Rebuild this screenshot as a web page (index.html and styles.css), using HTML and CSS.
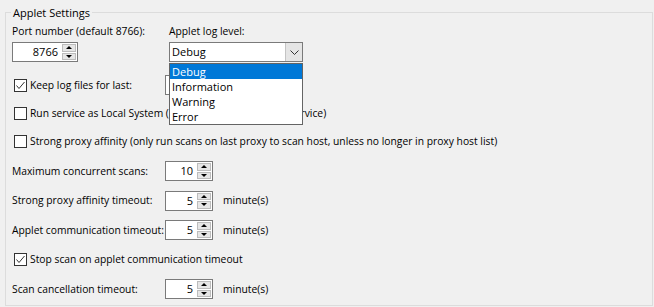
FILE: index.html
```html
<!DOCTYPE html>
<html>

<head>
    <title>Applet Settings</title>
    <link rel="stylesheet" href="styles.css">
</head>

<body>
    <fieldset class="group">
        <legend>Applet Settings</legend>

        <div class="top-row">
            <div class="field port-field">
                <label>Port number (default 8766):</label>
                <div class="spin spin-wide">
                    <span class="value">8766</span>
                    <span class="arrows"><span class="up"></span><span class="down"></span></span>
                </div>
            </div>
            <div class="field level-field">
                <label>Applet log level:</label>
                <div class="combo">
                    <span class="value">Debug</span>
                    <span class="drop-btn">
                        <svg width="9" height="5" viewBox="0 0 9 5"><polyline points="0.5,0.5 4.5,4.5 8.5,0.5" fill="none" stroke="#333" stroke-width="1"/></svg>
                    </span>
                </div>
                <ul class="drop-list">
                    <li class="selected">Debug</li>
                    <li>Information</li>
                    <li>Warning</li>
                    <li>Error</li>
                </ul>
            </div>
        </div>

        <div class="rows">
            <div class="row">
                <label class="check-label keep-label"><span class="check"><svg width="11" height="11" viewBox="0 0 11 11"><polyline points="1.5,5.5 4,8.5 9.5,2" fill="none" stroke="#333" stroke-width="1"/></svg></span>Keep log files for last:</label>
                <div class="spin"><span class="value">7</span><span class="arrows"><span class="up"></span><span class="down"></span></span></div>
            </div>
            <div class="row">
                <label class="check-label"><span class="check"></span>Run service as Local System (it will restart the applet's service)</label>
            </div>
            <div class="row">
                <label class="check-label"><span class="check"></span>Strong proxy affinity (only run scans on last proxy to scan host, unless no longer in proxy host list)</label>
            </div>
        </div>

        <div class="rows spin-rows">
            <div class="row">
                <label class="row-label">Maximum concurrent scans:</label>
                <div class="spin"><span class="value">10</span><span class="arrows"><span class="up"></span><span class="down"></span></span></div>
            </div>
            <div class="row">
                <label class="row-label">Strong proxy affinity timeout:</label>
                <div class="spin"><span class="value">5</span><span class="arrows"><span class="up"></span><span class="down"></span></span></div>
                <span class="unit">minute(s)</span>
            </div>
            <div class="row">
                <label class="row-label">Applet communication timeout:</label>
                <div class="spin"><span class="value">5</span><span class="arrows"><span class="up"></span><span class="down"></span></span></div>
                <span class="unit">minute(s)</span>
            </div>
            <div class="row">
                <label class="check-label"><span class="check"><svg width="11" height="11" viewBox="0 0 11 11"><polyline points="1.5,5.5 4,8.5 9.5,2" fill="none" stroke="#333" stroke-width="1"/></svg></span>Stop scan on applet communication timeout</label>
            </div>
            <div class="row">
                <label class="row-label">Scan cancellation timeout:</label>
                <div class="spin"><span class="value">5</span><span class="arrows"><span class="up"></span><span class="down"></span></span></div>
                <span class="unit">minute(s)</span>
            </div>
        </div>
    </fieldset>
</body>

</html>
```

FILE: styles.css
```css
body {
    font-family: "Open Sans", "Noto Sans", sans-serif;
    font-size: 10.3px;
    line-height: 15px;
    color: #000;
    background-color: #f0f0f0;
    margin: 0;
    padding: 5px 0 0 0;
}

.group {
    box-sizing: border-box;
    height: 301px;
    margin: 0 1px 0 5px;
    padding: 3px 6px 0 6px;
    border: 1px solid #dcdcdc;
}

.group legend {
    padding: 0 2px;
    margin-left: -1px;
    font-size: 11px;
}

.top-row {
    display: flex;
    margin-top: 1px;
}

.field {
    display: flex;
    flex-direction: column;
    gap: 3px;
}

.port-field {
    width: 157px;
}

.level-field {
    position: relative;
}

.spin {
    display: flex;
    flex-shrink: 0;
    width: 48px;
    height: 20px;
    box-sizing: border-box;
    border: 1px solid #7a7a7a;
    background-color: #fff;
}

.spin-wide {
    width: 66px;
}

.spin .value {
    flex: 1;
    text-align: right;
    padding-right: 4px;
    line-height: 18px;
    font-size: 11px;
}

.arrows {
    width: 14px;
    display: flex;
    flex-direction: column;
    gap: 1px;
    padding: 1px 1px 1px 0;
}

.arrows span {
    flex: 1;
    display: flex;
    align-items: center;
    justify-content: center;
    background-color: #e6e6e6;
    border: 1px solid #bcbcbc;
}

.arrows .up::after {
    content: "";
    border-left: 3px solid transparent;
    border-right: 3px solid transparent;
    border-bottom: 3px solid #000;
}

.arrows .down::after {
    content: "";
    border-left: 3px solid transparent;
    border-right: 3px solid transparent;
    border-top: 3px solid #000;
}

.combo {
    display: flex;
    width: 134px;
    height: 20px;
    box-sizing: border-box;
    border: 1px solid #7a7a7a;
    background-color: #fff;
}

.combo .value {
    flex: 1;
    padding-left: 2px;
    line-height: 18px;
    font-size: 11px;
}

.drop-btn {
    width: 16px;
    display: flex;
    align-items: center;
    justify-content: center;
    background-color: #e5e5e5;
    border-left: 1px solid #c4c4c4;
}

.drop-list {
    position: absolute;
    left: 0;
    top: 39px;
    width: 134px;
    box-sizing: border-box;
    margin: 0;
    padding: 0;
    list-style: none;
    background-color: #fff;
    border: 1px solid #646464;
    z-index: 2;
}

.drop-list li {
    height: 15px;
    line-height: 15px;
    padding-left: 2px;
    font-size: 11px;
}

.drop-list li.selected {
    background-color: #0078d7;
    color: #fff;
}

.rows {
    display: flex;
    flex-direction: column;
    gap: 8px;
    margin-top: 13px;
}

.spin-rows {
    gap: 9.5px;
    margin-top: 10px;
}

.row {
    display: flex;
    align-items: center;
    height: 20px;
}

.check-label {
    display: flex;
    align-items: center;
    white-space: nowrap;
}

.keep-label {
    width: 153px;
}

.check {
    flex-shrink: 0;
    width: 13px;
    height: 13px;
    box-sizing: border-box;
    margin: 0 3px 0 2px;
    border: 1px solid #333;
    background-color: #fff;
    display: flex;
}

.check svg {
    display: block;
}

.row-label {
    width: 153px;
    white-space: nowrap;
}

.unit {
    margin-left: 10px;
}
```
